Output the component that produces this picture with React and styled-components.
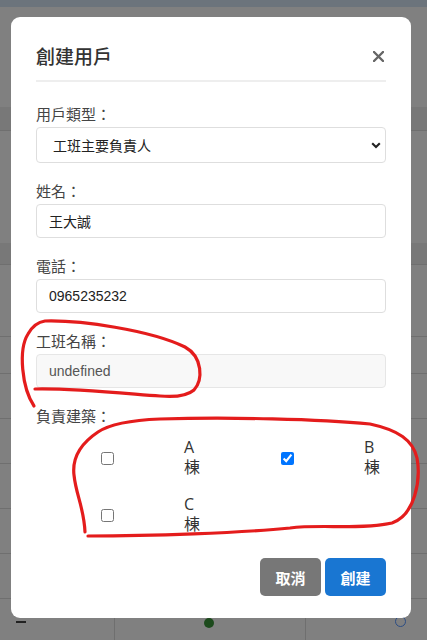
import React, { useState } from "react";
import styled, { createGlobalStyle } from "styled-components";

const GlobalStyle = createGlobalStyle`
  html, body {
    margin: 0;
    padding: 0;
    background: #808080;
  }
  body {
    font-family: "Liberation Sans", "Noto Sans CJK TC", sans-serif;
  }
`;

const Page = styled.div`
  position: relative;
  width: 427px;
  height: 640px;
  overflow: hidden;
  background: #808080;
`;

/* ---------- dimmed page behind the dialog ---------- */

const Backdrop = styled.div`
  display: flex;
  flex-direction: column;
`;

const TopBar = styled.div`
  height: 7px;
  background: #6c747c;
`;

const Row = styled.div`
  box-sizing: border-box;
  height: ${({ $h }) => $h}px;
  border-bottom: 1px solid #6f6f6f;
  background: ${({ $band }) =>
    $band
      ? `linear-gradient(to bottom, transparent calc(100% - ${$band}px), #787878 calc(100% - ${$band}px))`
      : "transparent"};
`;

const LastRow = styled.div`
  display: grid;
  grid-template-columns: 115px 191px 1fr;
  height: 41px;
`;

const Cell = styled.div`
  position: relative;
  border-right: ${({ $last }) => ($last ? "none" : "1px solid #6f6f6f")};
`;

const Dash = styled.div`
  margin: 22px 0 0 16px;
  width: 10px;
  height: 2px;
  background: #222;
`;

const Dot = styled.div`
  margin: 19px 0 0 89px;
  width: 10px;
  height: 10px;
  border-radius: 50%;
  background: #1c4a1c;
`;

const Ring = styled.div`
  margin: 17px 0 0 89px;
  box-sizing: border-box;
  width: 11px;
  height: 11px;
  border-radius: 50%;
  border: 1.5px solid #2b4d84;
`;

/* ---------- dialog ---------- */

const Overlay = styled.div`
  position: absolute;
  inset: 0;
  padding: 17px 0 0 11px;
`;

const Modal = styled.div`
  box-sizing: border-box;
  width: 400px;
  height: 601px;
  background: #fff;
  border-radius: 9px;
  padding: 0 25px 22px;
  display: flex;
  flex-direction: column;
`;

const Header = styled.div`
  display: flex;
  align-items: center;
  justify-content: space-between;
  padding: 25px 0 10px;
  border-bottom: 2px solid #eeeeee;
`;

const Title = styled.h2`
  margin: 0;
  font-size: 19px;
  line-height: 28px;
  font-weight: 500;
  color: #333;
  font-family: "Noto Sans CJK TC", sans-serif;
`;

const CloseButton = styled.button`
  border: none;
  background: none;
  padding: 0;
  margin-right: 2px;
  width: 11px;
  height: 11px;
  display: flex;
  cursor: pointer;
`;

const Body = styled.div`
  display: flex;
  flex-direction: column;
  gap: 16px;
  padding-top: 20px;
`;

const Field = styled.div`
  display: flex;
  flex-direction: column;
`;

const Label = styled.label`
  font-family: "Noto Sans CJK TC", sans-serif;
  font-size: 15px;
  line-height: 24px;
  color: #444;
  margin-bottom: 1px;
`;

const SelectWrap = styled.div`
  position: relative;
`;

const Select = styled.select`
  appearance: none;
  box-sizing: border-box;
  width: 100%;
  height: 36px;
  padding: 0 16px;
  border: 1px solid #dedede;
  border-radius: 4px;
  background: #fff;
  font-family: "Noto Sans CJK TC", sans-serif;
  font-size: 14px;
  color: #222;
  outline: none;
`;

const Chevron = styled.svg`
  position: absolute;
  right: 5px;
  top: 15px;
  pointer-events: none;
`;

const Input = styled.input`
  box-sizing: border-box;
  width: 100%;
  height: 34px;
  padding: 0 12px;
  border: 1px solid ${({ disabled }) => (disabled ? "#e6e6e6" : "#dedede")};
  border-radius: 4px;
  background: ${({ disabled }) => (disabled ? "#f8f8f8" : "#fff")};
  font-family: "Liberation Sans", "Noto Sans CJK TC", sans-serif;
  font-size: 14px;
  color: ${({ disabled }) => (disabled ? "#555" : "#222")};
  outline: none;
`;

const CheckGrid = styled.div`
  display: grid;
  grid-template-columns: repeat(2, 180px);
  row-gap: 17px;
  padding: 8px 0 0 65px;
`;

const CheckItem = styled.label`
  display: flex;
  align-items: center;
`;

const Check = styled.input`
  margin: 2px 0 0 0;
  width: 13px;
  height: 13px;
`;

const CheckText = styled.span`
  width: min-content;
  margin-left: 70px;
  font-family: "Open Sans", "Noto Sans CJK TC", sans-serif;
  font-size: 16px;
  line-height: 20px;
  color: #333;
`;

const Footer = styled.div`
  margin-top: auto;
  display: flex;
  justify-content: flex-end;
  gap: 4px;
`;

const Button = styled.button`
  width: 61px;
  height: 38px;
  border: none;
  border-radius: 5px;
  background: ${({ $primary }) => ($primary ? "#1976d2" : "#777777")};
  color: #fff;
  font-family: "Noto Sans CJK TC", sans-serif;
  font-size: 15px;
  font-weight: 700;
  cursor: pointer;
`;

const Marks = styled.svg`
  position: absolute;
  top: 0;
  left: 0;
  pointer-events: none;
`;

const buildings = [
  { id: "A", text: "A 棟" },
  { id: "B", text: "B 棟" },
  { id: "C", text: "C 棟" },
];

export default function App() {
  const [checked, setChecked] = useState({ A: false, B: true, C: false });
  const toggle = (id) => setChecked({ ...checked, [id]: !checked[id] });

  return (
    <>
      <GlobalStyle />
      <Page>
        <Backdrop>
          <TopBar />
          <Row $h={124} $band={23} />
          <Row $h={134} $band={21} />
          <Row $h={72} />
          <Row $h={37} />
          <Row $h={45} />
          <Row $h={45} />
          <Row $h={45} />
          <Row $h={45} />
          <Row $h={45} />
          <LastRow>
            <Cell>
              <Dash />
            </Cell>
            <Cell>
              <Dot />
            </Cell>
            <Cell $last>
              <Ring />
            </Cell>
          </LastRow>
        </Backdrop>

        <Overlay>
          <Modal>
            <Header>
              <Title>創建用戶</Title>
              <CloseButton aria-label="close">
                <svg width="11" height="11" viewBox="0 0 11 11">
                  <path d="M1 1 L10 10 M10 1 L1 10" stroke="#666" strokeWidth="2.4" strokeLinecap="round" />
                </svg>
              </CloseButton>
            </Header>

            <Body>
              <Field>
                <Label>用戶類型：</Label>
                <SelectWrap>
                  <Select defaultValue="lead">
                    <option value="lead">工班主要負責人</option>
                  </Select>
                  <Chevron width="10" height="7" viewBox="0 0 10 7">
                    <path d="M1.2 1.2 L5 5 L8.8 1.2" fill="none" stroke="#222" strokeWidth="2.1" />
                  </Chevron>
                </SelectWrap>
              </Field>

              <Field>
                <Label>姓名：</Label>
                <Input defaultValue="王大誠" />
              </Field>

              <Field>
                <Label>電話：</Label>
                <Input defaultValue="0965235232" />
              </Field>

              <Field>
                <Label>工班名稱：</Label>
                <Input disabled value="undefined" readOnly />
              </Field>

              <Field>
                <Label>負責建築：</Label>
                <CheckGrid>
                  {buildings.map((b) => (
                    <CheckItem key={b.id}>
                      <Check type="checkbox" checked={checked[b.id]} onChange={() => toggle(b.id)} />
                      <CheckText>{b.text}</CheckText>
                    </CheckItem>
                  ))}
                </CheckGrid>
              </Field>
            </Body>

            <Footer>
              <Button>取消</Button>
              <Button $primary>創建</Button>
            </Footer>
          </Modal>
        </Overlay>

        <Marks width="427" height="640" viewBox="0 0 427 640">
          <g fill="none" stroke="#e41c1c" strokeWidth="3.2" strokeLinecap="round" strokeLinejoin="round">
            <path d="M34 406 C22 388 18 350 28 334 C33 325 38 322 45 321 C80 320 150 330 185 347 C203 357 203 380 194 390 C186 397 172 397 160 396 C120 393 70 388 35 389" />
            <path d="M88 536 C150 536 240 533 290 528 C320 524 360 530 392 523 C415 515 421 480 417 458 C413 440 398 430 370 424 C320 419 230 417 160 419 C135 420 110 424 98 432 C80 444 72 458 74 475 C76 495 84 508 85 532" />
          </g>
        </Marks>
      </Page>
    </>
  );
}
